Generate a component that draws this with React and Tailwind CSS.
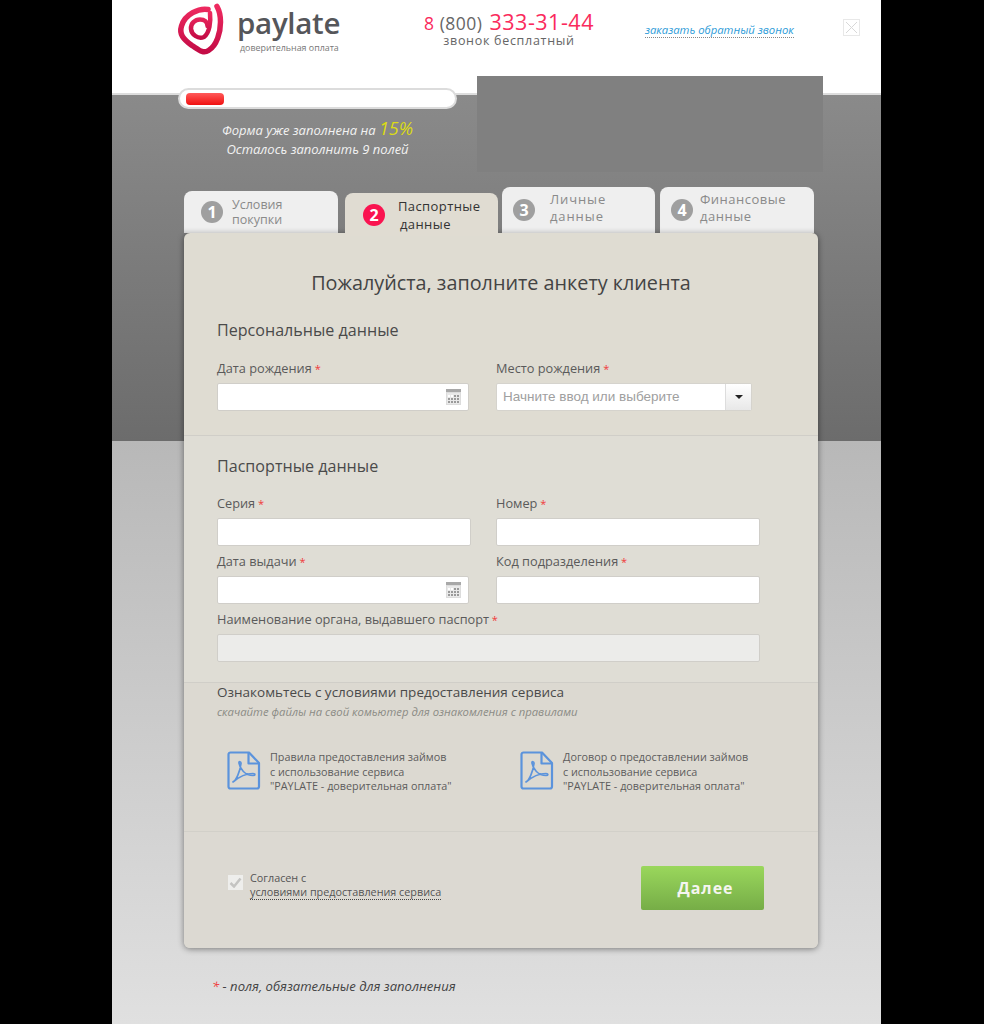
const font = { fontFamily: '"Open Sans", sans-serif' };

function Req() {
  return <span className="text-[11px] text-[#f03a3a]"> *</span>;
}

function CalendarIcon() {
  return (
    <svg width="15" height="16" viewBox="0 0 15 16" className="shrink-0">
      <rect x="0" y="0" width="15" height="16" fill="#dcdcdc" />
      <rect x="0" y="0" width="15" height="3" fill="#a8a8a8" />
      <rect x="1" y="4" width="13" height="11" fill="#e9e9e9" />
      {[2, 5, 8, 11].map((x) =>
        [6, 9, 12].map((y) => <rect key={x + "-" + y} x={x} y={y} width="2" height="2" fill={x > 6 || y > 8 ? "#9a9a9a" : "#fff"} />)
      )}
    </svg>
  );
}

function PdfIcon() {
  return (
    <svg width="34" height="39" viewBox="0 0 34 39" fill="none" className="shrink-0">
      <path d="M1.500 3.500a2 2 0 0 1 2-2h18.500L32 12v23.500a2 2 0 0 1-2 2H3.500a2 2 0 0 1-2-2z" stroke="#5b93dc" strokeWidth="2.200" strokeLinejoin="round" />
      <path d="M21.500 2v10.500H32" stroke="#5b93dc" strokeWidth="2.200" strokeLinejoin="round" />
      <path d="M6 31c3-1.500 7-10 8-18.500.2-2-2.300-2.500-2-.5 1 6 6 12.500 14 12.500 2.500 0 2.500-2 0-2-5 0-13 2.500-20 8.500z" stroke="#5b93dc" strokeWidth="1.700" strokeLinejoin="round" />
    </svg>
  );
}

function Logo() {
  return (
    <svg width="60" height="60" viewBox="0 0 60 60" fill="none">
      <defs>
        <linearGradient id="logoRed" x1="0" y1="0" x2="0" y2="1">
          <stop offset="0" stopColor="#ee2a60" />
          <stop offset="1" stopColor="#c40c46" />
        </linearGradient>
      </defs>
      <path d="M36 9.500C27 8 13 14 9.500 26C7 34 11 39 20 45.500C27 50 31 54 36.500 50.500C45 45.500 48.500 32 48.500 22C48.500 16 47 10 45 6.500" stroke="url(#logoRed)" strokeWidth="5.500" strokeLinecap="round" />
      <path d="M38 13C39 22 37.500 33 32 37C26 39.500 19.500 34.500 19 29C18.500 23.500 23 19.500 28 19.500C32.500 19.500 35.500 22 35.500 26" stroke="url(#logoRed)" strokeWidth="4.500" strokeLinecap="round" />
    </svg>
  );
}

function Tab({ n, lines, active, className, textClass }) {
  return (
    <div
      className={`flex h-full items-center rounded-t-lg ${
        active ? "relative z-10 bg-[#e0dcd2] text-[#333]" : "bg-[#efefef] text-[#8a8a8a] shadow-[inset_0_-5px_5px_-4px_rgba(0,0,0,0.2)]"
      } ${className}`}
    >
      <span
        className={`flex h-[22px] w-[22px] shrink-0 items-center justify-center rounded-full text-[16px] font-bold text-white ${
          active ? "bg-[#fa1450]" : "bg-[#9f9f9f]"
        }`}
      >
        {n}
      </span>
      <div className={textClass}>
        {lines.map((l, i) => (
          <div key={i}>{l}</div>
        ))}
      </div>
    </div>
  );
}

function Field({ label, className, children }) {
  return (
    <div className={className}>
      <div className="h-[23px] text-[12.750px] leading-[17px] text-[#5a5a5a]">
        {label}
        <Req />
      </div>
      {children}
    </div>
  );
}

function Input({ w, calendar, muted }) {
  return (
    <div
      className={`flex h-[28px] items-center justify-end rounded-[2px] border border-[#d0cec9] pr-[7px] ${
        muted ? "bg-[#ececea]" : "bg-white"
      } ${w}`}
    >
      {calendar && <CalendarIcon />}
    </div>
  );
}

function Doc({ lines, className }) {
  return (
    <div className={`flex items-start ${className}`}>
      <PdfIcon />
      <div className="ml-[9px] mt-[-1px] text-[10.800px] leading-[14.500px] text-[#5c5c5c]">
        {lines.map((l) => (
          <div key={l}>{l}</div>
        ))}
      </div>
    </div>
  );
}

export default function App() {
  return (
    <div className="h-[1024px] overflow-hidden bg-black" style={font}>
      <div className="ml-[112px] h-[1024px] w-[769px] bg-[linear-gradient(to_bottom,#ffffff_0,#ffffff_93px,#dddddd_93px,#dddddd_95px,#8a8a8a_95px,#6c6c6c_441px,#b8b8b8_441px,#e0e0e0_1024px)]">
        {/* header */}
        <div className="flex h-[88px] pl-[60px]">
          <div className="w-[60px] shrink-0">
            <Logo />
          </div>
          <div className="ml-[6px] mt-[4px] w-[160px] shrink-0">
            <div className="ml-[-1px] text-[29.500px] font-semibold leading-[38px] tracking-[-0.3px] text-[#55565a]">paylate</div>
            <div className="ml-[2px] text-[8.900px] leading-[11px] text-[#777]">доверительная оплата</div>
          </div>
          <div className="mt-[10px] w-[222px] shrink-0 text-center">
            <div className="h-[24px] whitespace-nowrap text-[17.500px] leading-[24px] tracking-[0.5px] text-[#fa2a5c]">
              8 <span className="mr-[2px] text-[#666]">(800)</span> <span className="text-[21.500px]">333-31-44</span>
            </div>
            <div className="text-[12.500px] leading-[14px] tracking-[0.7px] text-[#666]">звонок бесплатный</div>
          </div>
          <div className="ml-[25px] mt-[22px] h-[16px] w-[149px] whitespace-nowrap border-b border-dotted border-[#888] text-[11.300px] italic leading-[15px] text-[#2c9bd8]">
            заказать обратный звонок
          </div>
          <div className="ml-[49px] mt-[19px] flex h-[17px] w-[17px] items-center justify-center border border-[#e8e8e8] text-[#d8d8d8]">
            <svg width="13" height="13" viewBox="0 0 13 13" stroke="currentColor" strokeWidth="1">
              <path d="M1 1l11 11M12 1L1 12" />
            </svg>
          </div>
        </div>

        {/* progress + grey banner */}
        <div className="flex h-[96px] pl-[66px]">
          <div className="w-[279px]">
            <div className="flex h-[21px] items-center rounded-full border-2 border-[#dcdcdc] bg-white pl-[6px]">
              <div className="h-[12px] w-[38px] rounded-[4px] bg-[linear-gradient(to_bottom,#ff5a5a,#f01010)]" />
            </div>
            <div className="mt-[10px] whitespace-nowrap text-center text-[13px] italic leading-[19px] text-[#f2f2f2]">
              <div>
                Форма уже заполнена на <span className="text-[18px] leading-[19px] text-[#dcdc14]">15%</span>
              </div>
              <div>Осталось заполнить 9 полей</div>
            </div>
          </div>
          <div className="relative z-10 ml-[20px] mt-[-12px] h-[96px] w-[346px] bg-[#808080]" />
        </div>

        {/* tabs */}
        <div className="ml-[72px] flex h-[49px] w-[634px] items-stretch">
          <div className="mt-[7px] h-[42px] w-[154px]">
            <Tab n="1" lines={["Условия", "покупки"]} className="pl-[17px]" textClass="ml-[9px] text-[12.500px] leading-[15px]" />
          </div>
          <div className="ml-[7px] mt-[9px] h-[43px] w-[153px]">
            <Tab
              n="2"
              active
              lines={["Паспортные", <span className="ml-[2px]">данные</span>]}
              className="pl-[18px]"
              textClass="ml-[13px] text-[13px] leading-[18px] tracking-[0.4px]"
            />
          </div>
          <div className="ml-[4px] mt-[3px] h-[46px] w-[153px]">
            <Tab n="3" lines={["Личные", "данные"]} className="pl-[11px]" textClass="ml-[15px] mt-[-5px] text-[13px] leading-[17px] tracking-[0.9px]" />
          </div>
          <div className="ml-[5px] mt-[3px] h-[46px] w-[154px]">
            <Tab n="4" lines={["Финансовые", "данные"]} className="pl-[11px]" textClass="ml-[7px] mt-[-5px] text-[13px] leading-[17px] tracking-[0.5px]" />
          </div>
        </div>

        {/* form card */}
        <div className="ml-[72px] flex h-[715px] w-[634px] flex-col rounded-[6px] bg-[#dfdcd2] shadow-[0_1px_6px_rgba(0,0,0,0.45)]">
          <div className="h-[203px] border-b border-[#d0cec8] px-[33px]">
            <h1 className="pt-[36px] text-center text-[19.800px] font-normal leading-[28px] text-[#444]">
              Пожалуйста, заполните анкету клиента
            </h1>
            <h2 className="mt-[22px] text-[16.100px] font-normal leading-[22px] text-[#4a4a4a]">Персональные данные</h2>
            <div className="mt-[19px] flex">
              <Field label="Дата рождения" className="w-[279px]">
                <Input w="w-[252px]" calendar />
              </Field>
              <Field label="Место рождения">
                <div className="flex h-[28px] w-[256px] overflow-hidden rounded-[2px] border border-[#d5d3cd] bg-white">
                  <div className="flex flex-1 items-center pl-[6px] text-[13.500px] text-[#a0a0a0]" style={{ fontFamily: '"Liberation Sans", sans-serif' }}>
                    Начните ввод или выберите
                  </div>
                  <div className="flex w-[26px] items-center justify-center border-l border-[#ddd] bg-[linear-gradient(to_bottom,#ffffff,#e8e8e8)]">
                    <div className="h-0 w-0 border-x-[4px] border-t-[4px] border-x-transparent border-t-[#222]" />
                  </div>
                </div>
              </Field>
            </div>
          </div>

          <div className="h-[247px] border-b border-[#d0cec8] bg-[#dfddd5] px-[33px]">
            <h2 className="pt-[19px] text-[16.100px] font-normal leading-[22px] text-[#4a4a4a]">Паспортные данные</h2>
            <div className="mt-[18px] flex">
              <Field label="Серия" className="w-[279px]">
                <Input w="w-[254px]" />
              </Field>
              <Field label="Номер">
                <Input w="w-[264px]" />
              </Field>
            </div>
            <div className="mt-[7px] flex">
              <Field label="Дата выдачи" className="w-[279px]">
                <Input w="w-[252px]" calendar />
              </Field>
              <Field label="Код подразделения">
                <Input w="w-[264px]" />
              </Field>
            </div>
            <Field label="Наименование органа, выдавшего паспорт" className="mt-[7px]">
              <Input w="w-[543px]" muted />
            </Field>
          </div>

          <div className="h-[149px] border-b border-[#d2d0c9] bg-[#dcd9d1] px-[33px]">
            <div className="text-[13.500px] leading-[19px] text-[#4a4a4a]">Ознакомьтесь с условиями предоставления сервиса</div>
            <div className="mt-[2px] whitespace-nowrap text-[11.300px] italic leading-[16px] text-[#8b8b85]">
              скачайте файлы на свой комьютер для ознакомления с правилами
            </div>
            <div className="mt-[31px] flex pl-[10px]">
              <Doc className="w-[293px]" lines={["Правила предоставления займов", "с использование сервиса", '"PAYLATE - доверительная оплата"']} />
              <Doc lines={["Договор о предоставлении займов", "с использование сервиса", '"PAYLATE - доверительная оплата"']} />
            </div>
          </div>

          <div className="flex flex-1 items-start rounded-b-[6px] bg-[#dcd9d2] pl-[44px] pt-[34px]">
            <div className="mt-[9px] flex h-[15px] w-[15px] items-center justify-center bg-[#eeeeec] text-[#c4c4c2]">
              <svg width="13" height="11" viewBox="0 0 13 11" fill="none" stroke="currentColor" strokeWidth="2.500">
                <path d="M1.500 6l3.500 3.500L11.500 1.500" />
              </svg>
            </div>
            <div className="ml-[7px] mt-[5px] w-[391px] text-[10.800px] leading-[14px] text-[#555]">
              <div>Согласен с</div>
              <span className="border-b border-dotted border-[#444]">условиями предоставления сервиса</span>
            </div>
            <div className="flex h-[44px] w-[123px] items-center justify-center rounded-[2px] bg-[linear-gradient(to_bottom,#9ad75c,#76ad47)] pl-[6px] text-[16px] font-bold tracking-[1px] text-[#f5f5f0]">
              Далее
            </div>
          </div>
        </div>

        <div className="ml-[100px] mt-[29px] text-[13.100px] italic leading-[18px] text-[#444]">
          <span className="text-[#f03a3a]">*</span> - поля, обязательные для заполнения
        </div>
      </div>
    </div>
  );
}
